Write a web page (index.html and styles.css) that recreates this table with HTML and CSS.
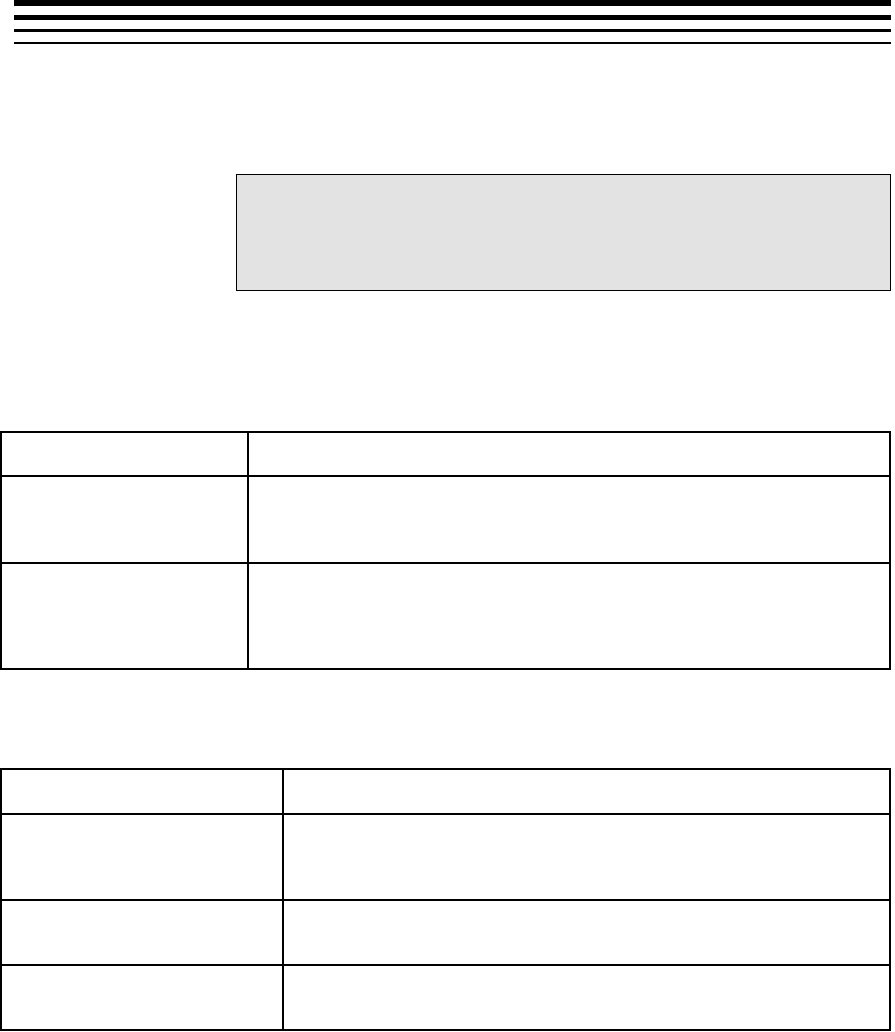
FILE: index.html
```html
<!DOCTYPE html>
<html lang="en">
<head>
<meta charset="utf-8">
<title>Document page</title>
<link rel="stylesheet" href="styles.css">
</head>
<body>
<div class="page">
  <header class="rules">
    <div class="rule r1"></div>
    <div class="rule r2"></div>
    <div class="rule r3"></div>
    <div class="rule r4"></div>
  </header>
  <div class="note"></div>
  <table class="grid grid-a">
    <tr class="h44"><td class="c1"></td><td></td></tr>
    <tr class="h87"><td class="c1"></td><td></td></tr>
    <tr class="h106"><td class="c1"></td><td></td></tr>
  </table>
  <table class="grid grid-b">
    <tr class="h45"><td class="c1"></td><td></td></tr>
    <tr class="h86"><td class="c1"></td><td></td></tr>
    <tr class="h65"><td class="c1"></td><td></td></tr>
    <tr class="h66"><td class="c1"></td><td></td></tr>
  </table>
</div>
</body>
</html>
```

FILE: styles.css
```css
html, body {
  margin: 0;
  padding: 0;
  background: #ffffff;
  font-family: "Liberation Sans", Arial, sans-serif;
}
.page {
  width: 895px;
}
.rules {
  margin-left: 14px;
  width: 877px;
  display: flex;
  flex-direction: column;
}
.rule { background: #000; }
.r1 { height: 6px; }
.r2 { height: 5px; margin-top: 9px; }
.r3 { height: 3px; margin-top: 9px; }
.r4 { height: 2px; margin-top: 10px; }

.note {
  margin-top: 130px;
  margin-left: 236px;
  width: 653px;
  height: 115px;
  background: #e3e3e3;
  border: 1px solid #000;
}

.grid {
  border-collapse: collapse;
  width: 891px;
  table-layout: fixed;
}
.grid td {
  border: 2px solid #000;
  padding: 0;
}
.grid-a { margin-top: 140px; }
.grid-a .c1 { width: 245px; }
.grid-b { margin-top: 98px; }
.grid-b .c1 { width: 280px; }
.h44 { height: 44px; }
.h45 { height: 45px; }
.h65 { height: 65px; }
.h66 { height: 65px; }
.h86 { height: 86px; }
.h87 { height: 87px; }
.h106 { height: 106px; }
```
